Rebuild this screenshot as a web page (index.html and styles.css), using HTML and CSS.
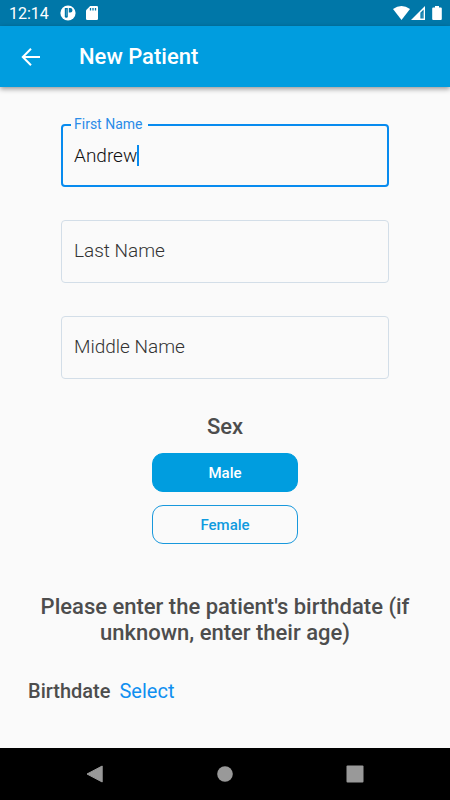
FILE: index.html
```html
<!DOCTYPE html>
<html lang="en">
<head>
<meta charset="utf-8">
<meta name="viewport" content="width=device-width, initial-scale=1">
<title>New Patient</title>
<link rel="stylesheet" href="styles.css">
</head>
<body>
<div class="status-bar">
  <div class="status-group">
    <time class="clock">12:14</time>
    <svg class="status-icon" width="16" height="16" viewBox="0 0 16 16" aria-hidden="true"><circle cx="8" cy="8" r="7.600" fill="#fff"/><path d="M4.800 3h3v8.200a1.500 1.500 0 0 1-3 0z" fill="#0077a8"/><path d="M8.800 3h1.500a2.200 2.200 0 0 1 0 4.400H8.800z" fill="#0077a8"/><path d="M6 4.200h.8v6.500H6z" fill="#fff" opacity=".3"/></svg>
    <svg class="status-icon" width="12" height="14" viewBox="0 0 12 14" aria-hidden="true"><path d="M4.200 0h6.600Q12 0 12 1.200v11.600q0 1.200-1.200 1.200H1.200Q0 14 0 12.800V4.200z" fill="#fff"/><path d="M4.500 2v2.500M7 2v2.500M9.500 2v2.500" stroke="#0077a8" stroke-width="1.300"/></svg>
  </div>
  <div class="status-signals">
    <svg width="17" height="14" viewBox="0 0 17 14" aria-hidden="true"><path d="M0 3Q8.500-3 17 3L8.500 14z" fill="#fff"/></svg>
    <svg width="14" height="14" viewBox="0 0 14 14" aria-hidden="true"><path d="M14 0v14H0z" fill="#fff"/><path d="M12.600 3.500v9H9.400V6.700z" fill="#0077a8"/><path d="M10.700 6.500h.8v6h-.8z" fill="#fff" opacity=".35"/></svg>
    <svg class="battery" width="10" height="14" viewBox="0 0 10 14" aria-hidden="true"><path d="M3 0h4v1.400h1.800q1 0 1 1V13q0 1-1 1H1.200q-1 0-1-1V2.400q0-1 1-1H3z" fill="#fff"/></svg>
  </div>
</div>
<header class="app-bar">
  <button class="back" type="button" aria-label="Back">
    <svg width="20" height="18" viewBox="0 0 20 18" fill="none" stroke="#fff" stroke-width="2" aria-hidden="true"><path d="M19 9H2M10 .8L1.800 9l8.200 8.200"/></svg>
  </button>
  <h1 class="title">New Patient</h1>
</header>
<main class="content">
  <form class="form">
    <div class="names">
      <div class="field field-active">
        <label class="field-label" for="first-name">First Name</label>
        <input class="field-input" id="first-name" type="text" value="Andrew">
        <span class="caret"></span>
      </div>
      <div class="field">
        <input class="field-input" type="text" placeholder="Last Name" aria-label="Last Name">
      </div>
      <div class="field">
        <input class="field-input" type="text" placeholder="Middle Name" aria-label="Middle Name">
      </div>
    </div>
    <section class="sex">
      <h2 class="heading">Sex</h2>
      <button class="choice choice-selected" type="button" aria-pressed="true">Male</button>
      <button class="choice" type="button" aria-pressed="false">Female</button>
    </section>
    <section class="birth">
      <h2 class="heading">Please enter the patient's birthdate (if unknown, enter their age)</h2>
      <div class="birthdate">
        <label class="birthdate-label" for="birthdate">Birthdate</label>
        <button class="select" id="birthdate" type="button">Select</button>
      </div>
    </section>
  </form>
</main>
<nav class="nav-bar" aria-label="System">
  <button class="nav-button" type="button" aria-label="Back"><svg width="18" height="18" viewBox="0 0 18 18" aria-hidden="true"><path d="M16.200 1v16L1 9z" fill="#999" stroke="#999" stroke-linejoin="round"/></svg></button>
  <button class="nav-button" type="button" aria-label="Home"><svg width="18" height="18" viewBox="0 0 18 18" aria-hidden="true"><circle cx="9" cy="9" r="7.800" fill="#999"/></svg></button>
  <button class="nav-button" type="button" aria-label="Overview"><svg width="18" height="18" viewBox="0 0 18 18" aria-hidden="true"><rect x=".5" y=".5" width="17" height="17" rx="1" fill="#999"/></svg></button>
</nav>
</body>
</html>
```
FILE: styles.css
```css
* {
  box-sizing: border-box;
}

body {
  margin: 0;
  min-height: 100vh;
  display: flex;
  flex-direction: column;
  background: #fafafa;
  color: #4d4d4d;
  font-family: Roboto, sans-serif;
}

button,
input {
  font-family: inherit;
}

button {
  padding: 0;
  border: 0;
  background: none;
}

svg {
  display: block;
}

h1,
h2 {
  margin: 0;
}

.status-bar {
  height: 26px;
  padding: 0 8px 0 9px;
  display: flex;
  align-items: center;
  justify-content: space-between;
  background: #0077a8;
  color: #fff;
}

.status-group,
.status-signals {
  display: flex;
  align-items: center;
}

.clock {
  width: 41px;
  font-size: 16px;
  font-weight: 400;
}

.status-icon {
  margin-left: 10px;
}

.status-signals {
  gap: 1px;
}

.battery {
  margin-left: 6px;
}

.app-bar {
  height: 61px;
  padding: 0 21px;
  display: flex;
  align-items: center;
  gap: 38px;
  background: #009ddf;
  color: #fff;
  box-shadow: 0 2px 5px rgba(0, 0, 0, 0.4);
}

.title {
  font-size: 22px;
  font-weight: 500;
  line-height: 28px;
}

.content {
  flex: 1;
  padding: 37px 28px 40px;
}

.names {
  padding: 0 33px;
  display: grid;
  gap: 33px;
}

.field {
  position: relative;
  height: 63px;
  display: flex;
  border: 1px solid #d3dee8;
  border-radius: 4px;
}

.field-active {
  border: 2px solid #078bef;
}

.field-input {
  width: 100%;
  padding: 0 12px 2px;
  border: 0;
  outline: 0;
  background: none;
  color: #111;
  font-size: 19px;
  font-weight: 300;
}

.field-active .field-input {
  padding: 0 11px;
}

.field-input::placeholder {
  color: #333;
  opacity: 1;
}

.field-label {
  position: absolute;
  top: -10px;
  left: 8px;
  padding: 0 6px 0 3px;
  background: #fafafa;
  color: #2a8ce8;
  font-size: 14px;
  line-height: 16px;
}

.caret {
  position: absolute;
  top: 19px;
  left: 74px;
  width: 2px;
  height: 21px;
  background: #078bef;
}

.sex {
  margin-top: 35px;
  display: flex;
  flex-direction: column;
  align-items: center;
  gap: 13px;
}

.heading {
  font-size: 22px;
  font-weight: 500;
  line-height: 26px;
  text-align: center;
}

.choice {
  width: 146px;
  height: 39px;
  border: 1px solid #1898dc;
  border-radius: 11px;
  color: #109bdf;
  font-size: 15px;
  font-weight: 500;
}

.choice-selected {
  border-color: #009ddf;
  background: #009ddf;
  color: #fff;
}

.birth {
  margin-top: 50px;
}

.birthdate {
  margin-top: 33px;
  display: flex;
  align-items: center;
  gap: 9px;
  font-size: 20px;
  line-height: 24px;
}

.birthdate-label {
  font-weight: 500;
}

.select {
  color: #108ff0;
  font-size: 20px;
  line-height: 24px;
}

.nav-bar {
  height: 52px;
  padding: 0 30px;
  display: grid;
  grid-template-columns: repeat(3, 1fr);
  background: #000;
}

.nav-button {
  display: flex;
  align-items: center;
  justify-content: center;
}
```
